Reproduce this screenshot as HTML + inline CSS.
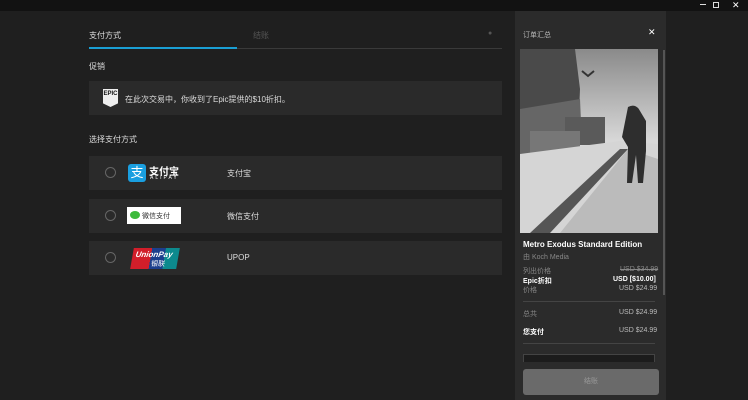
<!DOCTYPE html>
<html><head><meta charset="utf-8"><style>
*{margin:0;padding:0;box-sizing:border-box}
body{width:748px;height:400px;background:#1f1f1f;font-family:"Liberation Sans","Noto Sans CJK SC",sans-serif;color:#ddd;position:relative;overflow:hidden;font-size:8px}
.a{position:absolute}
.row{position:absolute;left:89px;width:413px;height:34px;background:#2a2a2a}
.radio{position:absolute;left:16px;top:11px;width:11px;height:11px;border:1px solid #666;border-radius:50%}
.lbl{position:absolute;left:138px;top:12px;font-size:8px;color:#ddd}
</style></head><body>
<div class="a" style="left:0;top:0;width:748px;height:11px;background:#121212"></div>
<div class="a" style="left:700px;top:4px;width:6px;height:1px;background:#ddd"></div>
<div class="a" style="left:713px;top:2px;width:6px;height:6px;border:1px solid #ddd"></div>
<div class="a" style="left:732px;top:0px;font-size:9px;color:#fff">✕</div>

<div class="a" style="left:89px;top:30px;font-size:8px;color:#ddd">支付方式</div>
<div class="a" style="left:253px;top:30px;font-size:8px;color:#555">结账</div>
<div class="a" style="left:488px;top:30px;font-size:7px;color:#555">●</div>
<div class="a" style="left:89px;top:48px;width:413px;height:1px;background:#3a3a3a"></div>
<div class="a" style="left:89px;top:47px;width:148px;height:2px;background:#1a9fd4"></div>
<div class="a" style="left:89px;top:61px;font-size:8px;color:#ddd">促销</div>
<div class="a" style="left:89px;top:81px;width:413px;height:34px;background:#2a2a2a"></div>
<div class="a" style="left:103px;top:89px;width:15px;height:18px;background:#eee;clip-path:polygon(0 0,100% 0,100% 80%,50% 100%,0 80%);color:#111;font-size:6px;font-weight:bold;text-align:center;line-height:11px">EPIC</div>
<div class="a" style="left:125px;top:94px;font-size:8px;color:#ddd">在此次交易中，你收到了Epic提供的$10折扣。</div>
<div class="a" style="left:89px;top:134px;font-size:8px;color:#ddd">选择支付方式</div>

<div class="row" style="top:156px"><div class="radio"></div>
<div class="a" style="left:39px;top:8px;width:18px;height:18px;background:#1a9fe0;border-radius:3px;color:#fff;font-size:13px;text-align:center;line-height:18px">支</div>
<div class="a" style="left:60px;top:7px;font-size:10px;color:#fff;font-weight:bold">支付宝</div>
<div class="a" style="left:61px;top:19px;font-size:5px;color:#fff;letter-spacing:2px">ALIPAY</div>
<div class="lbl">支付宝</div></div>

<div class="row" style="top:199px"><div class="radio"></div>
<div class="a" style="left:38px;top:8px;width:54px;height:17px;background:#fff"><div class="a" style="left:3px;top:4px;width:10px;height:8px;background:#3dba3c;border-radius:50%"></div><div class="a" style="left:15px;top:4px;font-size:7px;color:#333">微信支付</div></div>
<div class="lbl">微信支付</div></div>

<div class="row" style="top:241px"><div class="radio"></div>
<div class="a" style="left:43px;top:7px;width:46px;height:21px;background:linear-gradient(90deg,#d21e2a 0 40%,#1c3f8d 40% 70%,#0d8a8e 70%);transform:skewX(-10deg)"><div class="a" style="left:3px;top:2px;font-size:8px;color:#fff;font-style:italic;font-weight:bold">UnionPay</div><div class="a" style="left:20px;top:11px;font-size:7px;color:#fff">银联</div></div>
<div class="lbl">UPOP</div></div>

<div class="a" style="left:515px;top:11px;width:151px;height:389px;background:#2b2b2b"></div>
<div class="a" style="left:663px;top:50px;width:2px;height:245px;background:#555"></div>
<div class="a" style="left:523px;top:30px;font-size:7px;color:#bbb">订单汇总</div>
<div class="a" style="left:648px;top:27px;font-size:9px;color:#fff">✕</div>
<svg class="a" style="left:520px;top:49px" width="138" height="184" viewBox="0 0 138 184">
<defs><linearGradient id="sky" x1="0" y1="0" x2="0" y2="1"><stop offset="0" stop-color="#8a8a8a"/><stop offset="0.5" stop-color="#d8d8d8"/><stop offset="1" stop-color="#eee"/></linearGradient></defs>
<rect width="138" height="184" fill="url(#sky)"/>
<polygon points="0,0 55,0 60,40 58,90 0,110" fill="#4a4a4a"/>
<polygon points="0,60 60,50 62,95 0,110" fill="#666"/>
<rect x="45" y="68" width="40" height="28" fill="#5a5a5a"/>
<rect x="10" y="82" width="50" height="22" fill="#777"/>
<polygon points="0,105 100,92 138,95 138,184 0,184" fill="#d5d5d5"/>
<polygon points="10,184 100,100 108,100 30,184" fill="#555"/>
<polygon points="40,184 108,100 138,110 138,184" fill="#bbb"/>
<path d="M108 58 q8 -4 12 4 l6 10 v30 l-3 32 h-5 l-2 -28 l-4 28 h-5 l1 -36 l-6 -10 z" fill="#2e2e2e"/>
<path d="M62 22 l6 5 l6 -5" stroke="#333" stroke-width="2" fill="none"/>
</svg>
<div class="a" style="left:523px;top:240px;font-size:8px;font-weight:bold;color:#fff">Metro Exodus Standard Edition</div>
<div class="a" style="left:523px;top:252px;font-size:7px;color:#888">由 Koch Media</div>
<div class="a" style="left:523px;top:266px;font-size:7px;color:#888">列出价格</div>
<div class="a" style="left:620px;top:266px;font-size:7px;color:#888;text-decoration:line-through">USD $34.99</div>
<div class="a" style="left:523px;top:276px;font-size:7px;color:#fff;font-weight:bold">Epic折扣</div>
<div class="a" style="left:613px;top:276px;font-size:7px;color:#fff;font-weight:bold">USD [$10.00]</div>
<div class="a" style="left:523px;top:285px;font-size:7px;color:#888">价格</div>
<div class="a" style="left:619px;top:285px;font-size:7px;color:#bbb">USD $24.99</div>
<div class="a" style="left:523px;top:301px;width:132px;height:1px;background:#444"></div>
<div class="a" style="left:523px;top:309px;font-size:7px;color:#888">总共</div>
<div class="a" style="left:619px;top:309px;font-size:7px;color:#bbb">USD $24.99</div>
<div class="a" style="left:523px;top:327px;font-size:7px;color:#fff;font-weight:bold">您支付</div>
<div class="a" style="left:619px;top:327px;font-size:7px;color:#bbb">USD $24.99</div>
<div class="a" style="left:523px;top:343px;width:132px;height:1px;background:#444"></div>
<div class="a" style="left:523px;top:354px;width:132px;height:8px;background:#1c1c1c;border:1px solid #444;border-bottom:none"></div>
<div class="a" style="left:523px;top:369px;width:136px;height:26px;background:#6a6a6a;border-radius:3px;color:#999;font-size:7px;text-align:center;line-height:26px">结账</div>
</body></html>
